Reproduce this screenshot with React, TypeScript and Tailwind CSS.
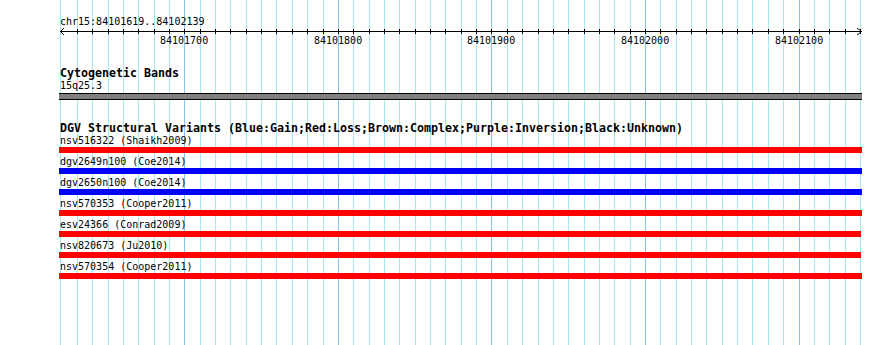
import React from "react";

const START = 84101620;
const col = (b: number) => Math.floor(62 + (b - START) * 1.5355);

const gridBps: number[] = [];
for (let b = 84101630; b <= 84102140; b += 10) gridBps.push(b);
const majors = [84101700, 84101800, 84101900, 84102000, 84102100];

const rows: { label: string; color: string; w: number }[] = [
  { label: "nsv516322 (Shaikh2009)", color: "red", w: 803 },
  { label: "dgv2649n100 (Coe2014)", color: "blue", w: 803 },
  { label: "dgv2650n100 (Coe2014)", color: "blue", w: 803 },
  { label: "nsv570353 (Cooper2011)", color: "red", w: 803 },
  { label: "esv24366 (Conrad2009)", color: "red", w: 802 },
  { label: "nsv820673 (Ju2010)", color: "red", w: 802 },
  { label: "nsv570354 (Cooper2011)", color: "red", w: 803 },
];

function Grid() {
  return (
    <svg className="absolute inset-0" width={890} height={345} shapeRendering="crispEdges">
      <rect x={60} y={0} width={1} height={345} fill="#aae6ee" />
      {gridBps.map((b) => (
        <rect
          key={b}
          x={col(b)}
          y={0}
          width={1}
          height={345}
          fill={b % 100 === 0 ? "#88c4e6" : "#aae6ee"}
        />
      ))}
    </svg>
  );
}

function Ruler() {
  return (
    <svg width={890} height={18} shapeRendering="crispEdges" className="block mt-[1px]">
      <rect x={60} y={3} width={802} height={1} fill="#000" />
      {gridBps.map((b) => (
        <rect key={b} x={col(b)} y={1} width={1} height={5} fill="#000" />
      ))}
      <polyline points="64,0 60.5,3.5 64,7" fill="none" stroke="#000" strokeWidth={1} shapeRendering="auto" />
      <polyline points="857,0 861.5,3.5 857,7" fill="none" stroke="#000" strokeWidth={1} shapeRendering="auto" />
      {majors.map((b) => (
        <text
          key={b}
          x={col(b) - 24}
          y={16}
          fontFamily="'DejaVu Sans Mono', monospace"
          fontSize={10}
          fill="#000"
        >
          {b}
        </text>
      ))}
    </svg>
  );
}

export default function App() {
  return (
    <div className="relative w-[890px] h-[345px] bg-white overflow-hidden text-black font-['DejaVu_Sans_Mono',monospace]">
      <Grid />
      <div className="relative flex flex-col">
        <div className="pt-[16px] pl-[60px] text-[10px] leading-[11px]">chr15:84101619..84102139</div>
        <Ruler />
        <div className="mt-[21px] pl-[60px] font-bold text-[11.63px] leading-[12px]">Cytogenetic Bands</div>
        <div className="mt-[1px] pl-[60px] text-[10px] leading-[11px]">15q25.3</div>
        <div className="ml-[59px] mt-[2px] h-[7px] w-[803px] border-y border-black bg-[#808080]" />
        <div className="mt-[22px] pl-[60px] font-bold text-[11.63px] leading-[12px] whitespace-nowrap">
          DGV Structural Variants (Blue:Gain;Red:Loss;Brown:Complex;Purple:Inversion;Black:Unknown)
        </div>
        <div className="mt-[1px] flex flex-col gap-[3px]">
          {rows.map((r) => (
            <div key={r.label} className="flex flex-col">
              <div className="pl-[60px] text-[10px] leading-[11px] whitespace-nowrap">{r.label}</div>
              <div
                className={`ml-[59px] mt-[1px] h-[6px] ${r.color === "red" ? "bg-[#ff0000]" : "bg-[#0000ff]"} ${r.w === 803 ? "w-[803px]" : "w-[802px]"}`}
              />
            </div>
          ))}
        </div>
      </div>
    </div>
  );
}
